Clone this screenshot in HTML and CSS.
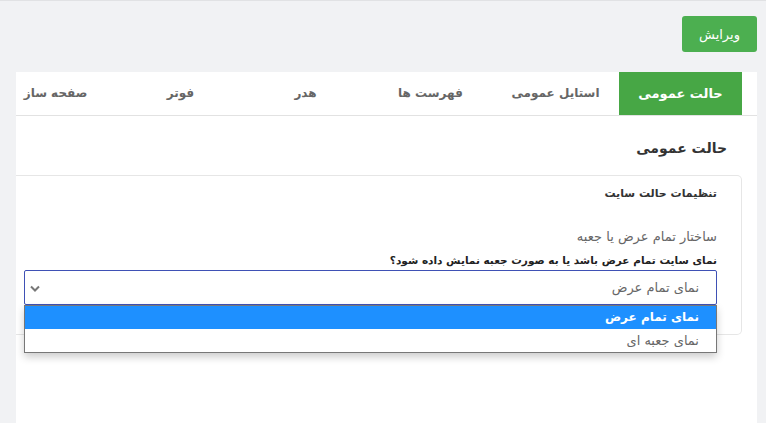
FILE: index.html
```html
<!DOCTYPE html>
<html lang="fa" dir="rtl">
    <head>
        <meta charset="utf-8">
        <title>تنظیمات قالب</title>
        <link rel="stylesheet" href="styles.css">
    </head>
    <body>
        <div id="page">
            <div id="toolbar">
                <button type="button" class="greenButton">ویرایش</button>
            </div>
            <div id="panel">
                <ul id="tabs">
                    <li class="tab active">حالت عمومی</li>
                    <li class="tab">استایل عمومی</li>
                    <li class="tab">فهرست ها</li>
                    <li class="tab">هدر</li>
                    <li class="tab">فوتر</li>
                    <li class="tab">صفحه ساز</li>
                </ul>
                <h2 class="sectionTitle">حالت عمومی</h2>
                <div class="settingsBox">
                    <h3 class="boxTitle">تنظیمات حالت سایت</h3>
                    <p class="fieldLabel">ساختار تمام عرض یا جعبه</p>
                    <p class="fieldHelp">نمای سایت تمام عرض باشد یا به صورت جعبه نمایش داده شود؟</p>
                    <div class="selectWrap">
                        <div class="fakeSelect">
                            <span>نمای تمام عرض</span>
                            <svg class="chevron" width="10" height="7" viewBox="0 0 10 7">
                                <path d="M1 1.5 L5 5.5 L9 1.5" fill="none" stroke="#777" stroke-width="2"/>
                            </svg>
                        </div>
                        <ul class="optionList">
                            <li class="option selected">نمای تمام عرض</li>
                            <li class="option">نمای جعبه ای</li>
                        </ul>
                    </div>
                </div>
            </div>
        </div>
    </body>
</html>
```

FILE: styles.css
```css
html, body {
    margin: 0;
    height: 100%;
}
body {
    background: #f1f2f4;
    font-family: "DejaVu Sans", sans-serif;
    color: #333;
    overflow: hidden;
}
#page {
    border-top: 1px solid #e1e2e4;
    padding: 15px 9px 0 16px;
    height: 100%;
    box-sizing: border-box;
    display: flex;
    flex-direction: column;
}
#toolbar {
    display: flex;
    justify-content: flex-start;
}
.greenButton {
    background: #4caf50;
    color: white;
    border: none;
    border-radius: 3px;
    width: 75px;
    height: 36px;
    font-family: inherit;
    font-size: 13px;
    cursor: pointer;
}
#panel {
    margin-top: 20px;
    background: white;
    flex: 1;
    padding: 0 15px 0 0;
    overflow: hidden;
}
#tabs {
    display: flex;
    gap: 2px;
    margin: 0 -15px 0 0;
    padding: 0 15px 0 0;
    list-style: none;
    border-bottom: 1px solid #e2e2e2;
    overflow: hidden;
}
.tab {
    flex: 0 0 123px;
    height: 43px;
    line-height: 43px;
    text-align: center;
    font-size: 12px;
    font-weight: bold;
    color: #666;
}
.tab.active {
    background: #47a745;
    color: white;
    font-size: 13px;
}
.sectionTitle {
    margin: 20px 15px 0 0;
    font-size: 14px;
    color: #333;
    height: 24px;
    line-height: 24px;
}
.settingsBox {
    margin-top: 15px;
    border: 1px solid #e6e6e6;
    border-left: none;
    border-radius: 0 5px 5px 0;
    padding: 8px 24px 29px 8px;
}
.boxTitle {
    margin: 0;
    font-size: 11px;
    line-height: 20px;
    color: #333;
}
.fieldLabel {
    margin: 23px 0 0;
    font-size: 13px;
    line-height: 20px;
    color: #666;
}
.fieldHelp {
    margin: 4px 0 0;
    font-size: 10.5px;
    font-weight: bold;
    line-height: 19px;
    color: #222;
}
.selectWrap {
    position: relative;
}
.fakeSelect {
    height: 35px;
    box-sizing: border-box;
    border: 1px solid #3f51b5;
    border-radius: 2px;
    display: flex;
    align-items: center;
    justify-content: space-between;
    padding: 0 17px 0 5px;
    font-size: 13px;
    color: #666;
}
.chevron {
    margin-top: 2px;
}
.optionList {
    position: absolute;
    top: 35px;
    left: 0;
    right: 0;
    margin: 0;
    padding: 0;
    list-style: none;
    background: white;
    border: 1px solid #777;
    box-shadow: 0 4px 8px rgba(0, 0, 0, 0.2);
}
.option {
    height: 23px;
    line-height: 23px;
    padding-right: 17px;
    font-size: 13px;
    color: #666;
}
.option.selected {
    background: #1e90ff;
    color: white;
    font-weight: bold;
    font-size: 12px;
}
```
